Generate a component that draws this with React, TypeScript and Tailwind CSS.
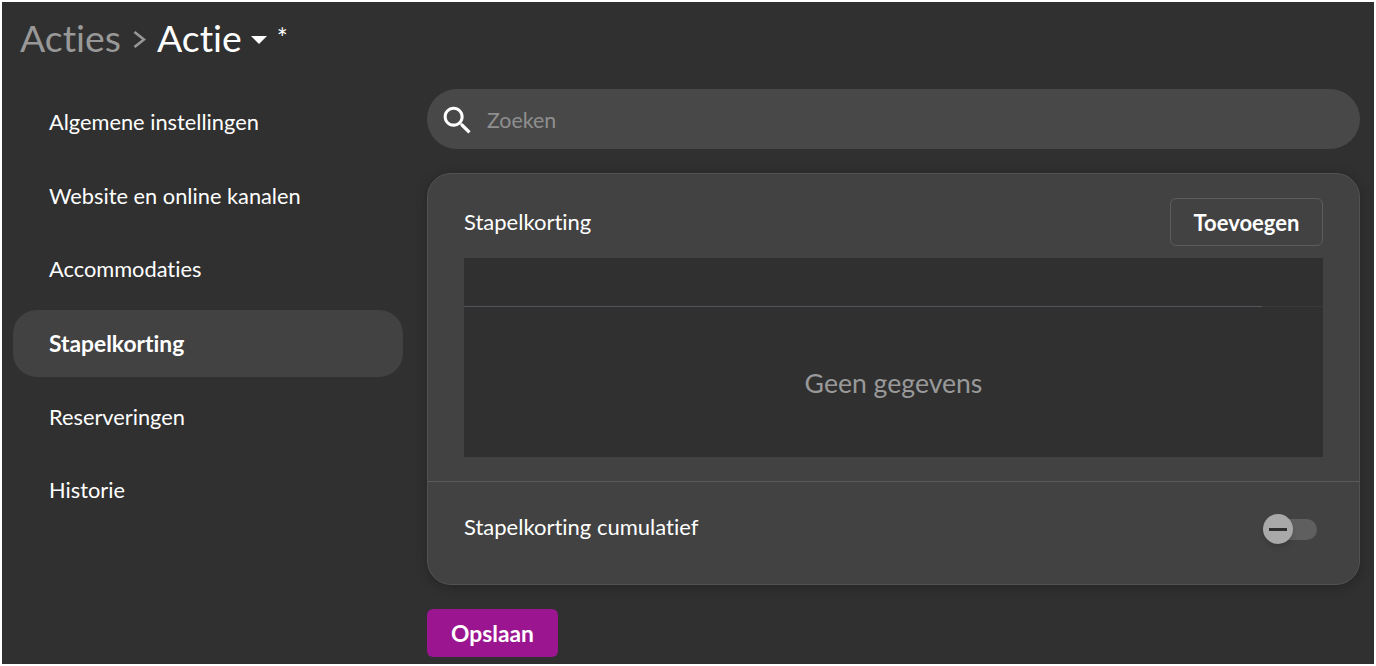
const navItems = [
  "Algemene instellingen",
  "Website en online kanalen",
  "Accommodaties",
  "Stapelkorting",
  "Reserveringen",
  "Historie",
];

export default function App() {
  return (
    <div className="h-[666px] w-[1376px] overflow-hidden bg-white pl-[2px] pt-[2px] pr-[2px] font-['Lato',sans-serif] text-white [font-variant-ligatures:none]">
      <div className="h-[662px] bg-[#303030]">
        <div className="flex h-[76px] items-center pl-[18px] pb-[3px]">
          <span className="text-[37.4px] text-[#989898]">Acties</span>
          <svg className="ml-[12px] mt-[2px] h-[17px] w-[13px]" viewBox="0 0 13 17" fill="none">
            <path d="M1.5 1l9.5 7.5-9.5 7.5" stroke="#989898" strokeWidth="2.6" />
          </svg>
          <span className="ml-[11px] text-[37.4px] text-white">Actie</span>
          <svg className="ml-[9px] mt-[2px] h-[8px] w-[16px]" viewBox="0 0 16 8">
            <path d="M0 0h16L8 8z" fill="#ffffff" />
          </svg>
          <span className="ml-[10px] text-[26px]">*</span>
        </div>
        <div className="flex gap-6 pl-[11px] pr-[14px]">
          <nav className="flex w-[390px] flex-col gap-[6.6px] pt-[11px]">
            {navItems.map((item) => (
              <div
                key={item}
                className={
                  item === "Stapelkorting"
                    ? "flex h-[67px] items-center rounded-[24px] bg-[#424242] px-9 text-[22.8px] font-bold"
                    : "flex h-[67px] items-center px-9 text-[21.8px]"
                }
              >
                {item}
              </div>
            ))}
          </nav>
          <main className="flex-1 pt-[11px]">
            <div className="flex h-[60px] items-center rounded-[30px] bg-[#484848] pl-[12px]">
              <svg className="mt-[2px] h-[37px] w-[37px]" viewBox="0 0 24 24" fill="#ffffff">
                <path d="M15.5 14h-.79l-.28-.27C15.41 12.59 16 11.11 16 9.5 16 5.91 13.09 3 9.5 3S3 5.91 3 9.5 5.91 16 9.5 16c1.61 0 3.09-.59 4.23-1.57l.27.28v.79l5 4.99L20.49 19l-4.99-5zm-6 0C7.01 14 5 11.99 5 9.5S7.01 5 9.5 5 14 7.01 14 9.5 11.99 14 9.5 14z" />
              </svg>
              <span className="ml-[1px] pl-[10px] pt-[3px] text-[21.4px] text-[#8f8f8f]">Zoeken</span>
            </div>
            <section className="mt-6 rounded-[24px] border border-[#525252] bg-[#424242] shadow-[0_2px_12px_rgba(0,0,0,0.25)]">
              <div className="px-9 pt-6 pb-6">
                <div className="flex h-[48px] items-center justify-between">
                  <span className="pb-[2px] text-[22px]">Stapelkorting</span>
                  <button className="h-[48px] w-[153px] rounded-[6px] border border-[#5c5c5c] text-[22px] font-bold">
                    Toevoegen
                  </button>
                </div>
                <div className="mt-3 bg-[#303030]">
                  <div className="flex h-[49px] items-end">
                    <div className="h-px flex-1 bg-[#55525c]" />
                    <div className="h-px w-[61px] bg-[#383838]" />
                  </div>
                  <div className="flex h-[150px] items-center justify-center pt-[4px] text-[26.6px] text-[#999999]">
                    Geen gegevens
                  </div>
                </div>
              </div>
              <div className="flex h-[103px] items-center justify-between border-t border-[#5a5a5a] pl-9 pr-[42px] pb-[14px]">
                <span className="text-[22px]">Stapelkorting cumulatief</span>
                <div className="relative mt-[7px] h-[21px] w-[42px] rounded-full bg-[#5f5f5f]">
                  <div className="absolute left-[-12px] top-[-5px] flex h-[30px] w-[30px] items-center justify-center rounded-full bg-[#a9a9a9] shadow-md">
                    <div className="h-[3px] w-[18px] bg-[#2e2e2e]" />
                  </div>
                </div>
              </div>
            </section>
            <button className="mt-6 h-[48px] w-[131px] rounded-[6px] bg-[#9c1590] text-[22.8px] font-bold">
              Opslaan
            </button>
          </main>
        </div>
      </div>
    </div>
  );
}
